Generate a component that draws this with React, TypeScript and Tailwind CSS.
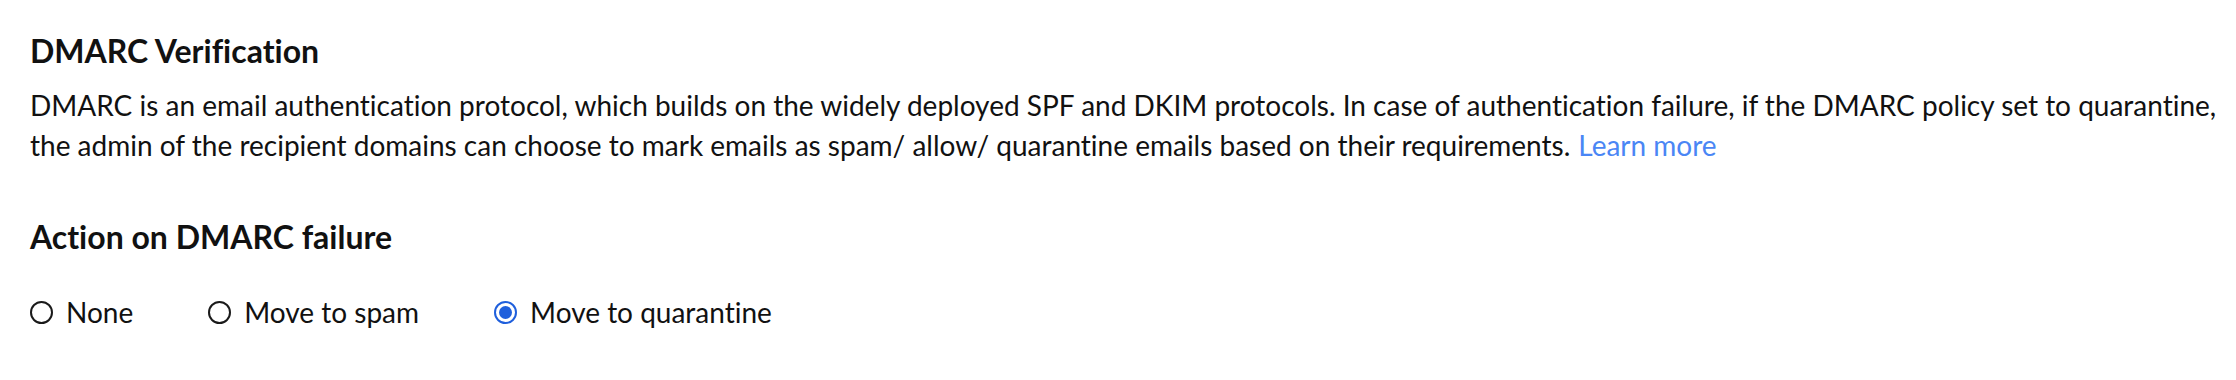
import React from "react";

function Radio({ checked, label }: { checked?: boolean; label: string }) {
  return (
    <label className="flex items-center gap-[13px] cursor-pointer">
      {checked ? (
        <span className="flex h-[23px] w-[23px] items-center justify-center rounded-full border-[2px] border-[#1f5fdc]">
          <span className="h-[13px] w-[13px] rounded-full bg-[#1f5fdc]" />
        </span>
      ) : (
        <span className="h-[23px] w-[23px] rounded-full border-[2px] border-[#1a1a1a]" />
      )}
      <span>{label}</span>
    </label>
  );
}

export default function App() {
  return (
    <div
      className="w-[2236px] h-[380px] overflow-hidden bg-white text-[#111111] pl-[30px] pt-[31px] [font-variant-ligatures:none]"
      style={{ fontFamily: "Lato, 'Noto Sans', sans-serif" }}
    >
      <h1 className="text-[32px] font-bold leading-[40px]">DMARC Verification</h1>
      <p className="mt-[14px] text-[28px] leading-[40px] whitespace-nowrap">
        DMARC is an email authentication protocol, which builds on the widely deployed SPF and DKIM protocols. In case of
        authentication failure, if the DMARC policy set to quarantine,
        <br />
        the admin of the recipient domains can choose to mark emails as spam/ allow/ quarantine emails based on their
        requirements.
        <a className="ml-[8px] text-[#4a86f5]">Learn more</a>
      </p>
      <h2 className="mt-[52px] text-[32px] font-bold leading-[40px]">Action on DMARC failure</h2>
      <div className="mt-[35px] flex items-center gap-[75px] text-[28px] leading-[40px]">
        <Radio label="None" />
        <Radio label="Move to spam" />
        <Radio checked label="Move to quarantine" />
      </div>
    </div>
  );
}
